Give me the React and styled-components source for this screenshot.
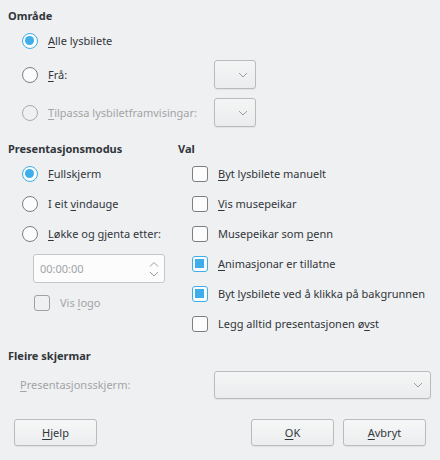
import React from 'react'
import styled, { createGlobalStyle, css } from 'styled-components'

const theme = {
  bg: '#eff0f1',
  text: '#31363b',
  disabled: '#a2a4a6',
  blue: '#3daee9',
  border: '#b9bbbd',
  mark: '#7b7e82',
}

const GlobalStyle = createGlobalStyle`
  html, body {
    margin:0;
    padding:0;
    background:${theme.bg};
  }
  body {
    font-family:"Noto Sans", "DejaVu Sans", sans-serif;
    font-size:11px;
    color:${theme.text};
  }
`

const Dialog = styled.div`
  width:440px;
  height:460px;
  box-sizing:border-box;
  padding:8px 0 0 0;
  display:flex;
  flex-direction:column;
  background:${theme.bg};
`

const Heading = styled.div`
  font-weight:bold;
  line-height:16px;
  height:16px;
  padding-left:8px;
`

const Mn = styled.span`
  text-decoration:underline;
  text-underline-offset:2px;
  text-decoration-thickness:1px;
`

const Label = styled.span`
  line-height:20px;
  white-space:nowrap;
  color:${p => (p.$disabled ? theme.disabled : theme.text)};
`

/* Område */
const RangeGroup = styled.div`
  display:flex;
  flex-direction:column;
  gap:9px;
  margin-top:7px;
  padding-left:22px;
`

const RangeRow = styled.div`
  display:grid;
  grid-template-columns:192px 42px;
  align-items:center;
  height:${p => p.$h || 29}px;
`

const Choice = styled.label`
  display:flex;
  align-items:center;
  gap:10px;
  height:20px;
`

const Radio = styled.span`
  flex:0 0 auto;
  width:16px;
  height:16px;
  box-sizing:border-box;
  border-radius:50%;
  border:1px solid ${p => (p.$disabled ? '#a9abad' : theme.mark)};
  background:${p => (p.$disabled ? 'transparent' : '#fcfcfc')};
  position:relative;
  ${p => p.$checked && css`
    border:1.5px solid ${theme.blue};
    background:#fcfcfc;
    &::after{
      content:'';
      position:absolute;
      left:2px;
      top:2px;
      width:9px;
      height:9px;
      border-radius:50%;
      background:${theme.blue};
    }
  `}
`

const Box = styled.span`
  flex:0 0 auto;
  width:16px;
  height:16px;
  box-sizing:border-box;
  border-radius:3px;
  border:1px solid ${p => (p.$disabled ? '#9fa1a3' : theme.mark)};
  background:${p => (p.$disabled ? 'transparent' : '#fcfcfc')};
  position:relative;
  ${p => p.$checked && css`
    border:1.5px solid ${theme.blue};
    &::after{
      content:'';
      position:absolute;
      left:2px;
      top:2px;
      width:9px;
      height:9px;
      background:${theme.blue};
    }
  `}
`

const Combo = styled.div`
  box-sizing:border-box;
  width:${p => p.$w || 42}px;
  height:${p => p.$h || 29}px;
  border:1px solid ${theme.border};
  border-radius:3px;
  background:linear-gradient(#f4f5f5, #ebeced);
  box-shadow:0 1px 1px rgba(0,0,0,0.06);
  display:flex;
  align-items:center;
  justify-content:flex-end;
  padding-right:7px;
`

const Chevron = ({ up }) => (
  <svg width="10" height="6" viewBox="0 0 10 6">
    <path d={up ? 'M1 5.5 L5 1.5 L9 5.5' : 'M1 1 L5 5 L9 1'} fill="none" stroke="#9a9c9f" strokeWidth="1" />
  </svg>
)

/* Presentasjonsmodus / Val */
const Columns = styled.div`
  display:grid;
  grid-template-columns:178px 1fr;
  margin-top:14px;
`

const Column = styled.div`
  display:flex;
  flex-direction:column;
  ${p => p.$right && css`
    ${Heading} { padding-left:0; }
  `}
`

const OptionList = styled.div`
  display:flex;
  flex-direction:column;
  gap:10px;
  margin-top:7px;
  padding-left:${p => p.$indent}px;
`

const SpinBox = styled.div`
  box-sizing:border-box;
  width:132px;
  height:29px;
  margin-left:11px;
  border:1px solid #c4c6c8;
  border-radius:3px;
  background:#fcfcfc;
  display:flex;
  align-items:center;
  justify-content:space-between;
  padding:0 5px 0 6px;
  color:${theme.disabled};
`

const SpinArrows = styled.div`
  display:flex;
  flex-direction:column;
  gap:4px;
`

const LogoRow = styled(Choice)`
  margin-left:12px;
`

/* Fleire skjermar */
const Screens = styled.div`
  display:flex;
  flex-direction:column;
  margin-top:14px;
`

const ScreenRow = styled.div`
  display:grid;
  grid-template-columns:194px 217px;
  align-items:center;
  margin-top:7px;
  padding-left:20px;
`

const ButtonBar = styled.div`
  display:flex;
  align-items:center;
  margin-top:20px;
  padding:0 14px;
  gap:9px;
`

const Button = styled.button`
  box-sizing:border-box;
  width:83px;
  height:27px;
  border:1px solid ${theme.border};
  border-radius:3px;
  background:linear-gradient(#f6f7f7, #ecedee);
  box-shadow:0 1px 1px rgba(0,0,0,0.06);
  font:inherit;
  color:${theme.text};
  padding:0;
  ${p => p.$push && css`margin-left:auto;`}
`

const App = () => {
  return (
    <>
      <GlobalStyle />
      <Dialog>
        <Heading>Område</Heading>
        <RangeGroup>
          <RangeRow $h={20}>
            <Choice>
              <Radio $checked />
              <Label><Mn>A</Mn>lle lysbilete</Label>
            </Choice>
          </RangeRow>
          <RangeRow>
            <Choice>
              <Radio />
              <Label><Mn>F</Mn>rå:</Label>
            </Choice>
            <Combo><Chevron /></Combo>
          </RangeRow>
          <RangeRow>
            <Choice>
              <Radio $disabled />
              <Label $disabled><Mn>T</Mn>ilpassa lysbiletframvisingar:</Label>
            </Choice>
            <Combo><Chevron /></Combo>
          </RangeRow>
        </RangeGroup>

        <Columns>
          <Column>
            <Heading>Presentasjonsmodus</Heading>
            <OptionList $indent={22}>
              <Choice>
                <Radio $checked />
                <Label><Mn>F</Mn>ullskjerm</Label>
              </Choice>
              <Choice>
                <Radio />
                <Label>I eit <Mn>v</Mn>indauge</Label>
              </Choice>
              <Choice>
                <Radio />
                <Label><Mn>L</Mn>økke og gjenta etter:</Label>
              </Choice>
              <SpinBox>
                <span>00:00:00</span>
                <SpinArrows>
                  <Chevron up />
                  <Chevron />
                </SpinArrows>
              </SpinBox>
              <LogoRow>
                <Box $disabled />
                <Label $disabled>Vis <Mn>l</Mn>ogo</Label>
              </LogoRow>
            </OptionList>
          </Column>
          <Column $right>
            <Heading>Val</Heading>
            <OptionList $indent={14}>
              <Choice>
                <Box />
                <Label><Mn>B</Mn>yt lysbilete manuelt</Label>
              </Choice>
              <Choice>
                <Box />
                <Label><Mn>V</Mn>is musepeikar</Label>
              </Choice>
              <Choice>
                <Box />
                <Label>Musepeikar som <Mn>p</Mn>enn</Label>
              </Choice>
              <Choice>
                <Box $checked />
                <Label><Mn>A</Mn>nimasjonar er tillatne</Label>
              </Choice>
              <Choice>
                <Box $checked />
                <Label>Byt <Mn>l</Mn>ysbilete ved å klikka på bakgrunnen</Label>
              </Choice>
              <Choice>
                <Box />
                <Label>Legg alltid presentasjonen ø<Mn>v</Mn>st</Label>
              </Choice>
            </OptionList>
          </Column>
        </Columns>

        <Screens>
          <Heading>Fleire skjermar</Heading>
          <ScreenRow>
            <Label $disabled><Mn>P</Mn>resentasjonsskjerm:</Label>
            <Combo $w={217} $h={28}><Chevron /></Combo>
          </ScreenRow>
        </Screens>

        <ButtonBar>
          <Button><Mn>H</Mn>jelp</Button>
          <Button $push><Mn>O</Mn>K</Button>
          <Button><Mn>A</Mn>vbryt</Button>
        </ButtonBar>
      </Dialog>
    </>
  )
}

export default App
